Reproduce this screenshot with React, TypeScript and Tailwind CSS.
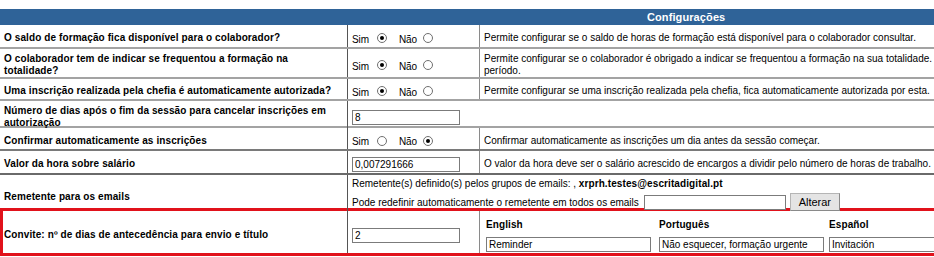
import React from "react";

const bodyText = "text-[10px] leading-[12px]";
const labelText = "font-bold text-[10px] leading-[12px] tracking-[0.1px]";

function Radio({ checked, className }: { checked?: boolean; className?: string }) {
  return (
    <span
      className={
        "inline-flex h-[10px] w-[10px] items-center justify-center rounded-full border border-[#6f6f6f] bg-white " +
        (className || "")
      }
    >
      {checked && <span className="h-[4px] w-[4px] rounded-full bg-black" />}
    </span>
  );
}

function YesNo({ yes }: { yes: boolean }) {
  return (
    <div className="flex items-center tracking-[-0.1px]">
      <span className="mt-[3px]">Sim</span>
      <Radio checked={yes} className="ml-[8px]" />
      <span className="ml-[12px] mt-[3px]">Não</span>
      <Radio checked={!yes} className="ml-[6px]" />
    </div>
  );
}

function TextBox({ value, className }: { value: string; className?: string }) {
  return (
    <input
      readOnly
      defaultValue={value}
      className={
        "h-[15px] border border-[#7b7b7b] bg-white px-[2px] text-[10px] leading-[13px] text-black outline-none " +
        (className || "")
      }
    />
  );
}

function Row({
  height,
  line,
  label,
  children,
}: {
  height: string;
  line: string;
  label: React.ReactNode;
  children: React.ReactNode;
}) {
  return (
    <div className={"grid grid-cols-[348px_132px_1fr] border-b-2 " + height + " " + line}>
      <div className={"flex items-center border-r border-[#555] pl-[4px] pt-[4px] " + labelText}>{label}</div>
      {children}
    </div>
  );
}

const col2 = "flex items-center border-r border-[#8a8a8a] pl-[4px] pt-[4px]";
const col3 = "flex items-center pl-[4px] pt-[4px]";

export default function App() {
  return (
    <div className="h-[257px] w-[934px] overflow-hidden bg-white pt-[9px] text-black font-['Liberation_Sans',Arial,sans-serif]">
      <div className={"w-[960px] " + bodyText}>
        {/* cabeçalho */}
        <div className="h-[16px] bg-[#2f6398] pl-[647px] text-[11px] font-bold leading-[16px] tracking-[0.1px] text-white">
          Configurações
        </div>

        <Row height="h-[24px]" line="border-[#a3a3a3]" label="O saldo de formação fica disponível para o colaborador?">
          <div className={col2}>
            <YesNo yes />
          </div>
          <div className={col3}>
            Permite configurar se o saldo de horas de formação está disponível para o colaborador consultar.
          </div>
        </Row>

        <Row
          height="h-[30px]"
          line="border-[#a3a3a3]"
          label={
            <span>
              O colaborador tem de indicar se frequentou a formação na
              <br />
              totalidade?
            </span>
          }
        >
          <div className={col2}>
            <YesNo yes />
          </div>
          <div className={col3}>
            <span>
              Permite configurar se o colaborador é obrigado a indicar se frequentou a formação na sua totalidade.
              <br />
              período.
            </span>
          </div>
        </Row>

        <Row height="h-[22px]" line="border-[#a3a3a3]" label="Uma inscrição realizada pela chefia é automaticamente autorizada?">
          <div className={col2}>
            <YesNo yes />
          </div>
          <div className={col3}>
            Permite configurar se uma inscrição realizada pela chefia, fica automaticamente autorizada por esta.
          </div>
        </Row>

        <Row
          height="h-[27px]"
          line="border-[#a3a3a3]"
          label={
            <span>
              Número de dias após o fim da sessão para cancelar inscrições em
              <br />
              autorização
            </span>
          }
        >
          <div className="col-span-2 flex items-center pl-[4px] pt-[4px]">
            <TextBox value="8" className="w-[108px]" />
          </div>
        </Row>

        <Row height="h-[23px]" line="border-[#7a7a7a]" label="Confirmar automaticamente as inscrições">
          <div className={col2}>
            <YesNo yes={false} />
          </div>
          <div className={col3}>Confirmar automaticamente as inscrições um dia antes da sessão começar.</div>
        </Row>

        <Row height="h-[24px]" line="border-[#6a6a6a]" label="Valor da hora sobre salário">
          <div className={col2}>
            <TextBox value="0,007291666" className="w-[108px]" />
          </div>
          <div className={col3}>
            O valor da hora deve ser o salário acrescido de encargos a dividir pelo número de horas de trabalho.
          </div>
        </Row>

        <Row height="h-[33px]" line="border-transparent" label={<span className="mt-[4px]">Remetente para os emails</span>}>
          <div className="col-span-2 flex flex-col justify-center pl-[4px] pt-[3px]">
            <div>
              Remetente(s) definido(s) pelos grupos de emails: , <b className="tracking-[0.1px]">xrprh.testes@escritadigital.pt</b>
            </div>
            <div className="mt-[3px] flex items-center">
              <span className="mt-[2px]">Pode redefinir automaticamente o remetente em todos os emails</span>
              <TextBox value="" className="ml-[5px] w-[142px]" />
              <button className="ml-[4px] h-[18px] w-[50px] border border-[#b5b5b5] border-b-[#8a8a8a] border-r-[#8a8a8a] bg-[#e4e4e4] text-[11px] leading-[16px] text-black">
                Alterar
              </button>
            </div>
          </div>
        </Row>

        {/* linha em destaque */}
        <div className="grid h-[48px] grid-cols-[345px_132px_1fr] border-[3px] border-[#e1121b]">
          <div className={"flex items-center border-r border-[#555] pl-[1px] pt-[6px] " + labelText}>
            Convite: nº de dias de antecedência para envio e título
          </div>
          <div className="flex items-center border-r border-[#8a8a8a] pl-[4px] pt-[6px]">
            <TextBox value="2" className="w-[108px]" />
          </div>
          <div className="grid grid-cols-[173px_170px_173px] pl-[6px] pt-[8px]">
            {[
              ["English", "Reminder"],
              ["Português", "Não esquecer, formação urgente"],
              ["Español", "Invitación"],
            ].map(([lang, value]) => (
              <div key={lang} className="flex flex-col">
                <span className={labelText}>{lang}</span>
                <TextBox value={value} className="mt-[6px] w-[165px]" />
              </div>
            ))}
          </div>
        </div>
      </div>
    </div>
  );
}
